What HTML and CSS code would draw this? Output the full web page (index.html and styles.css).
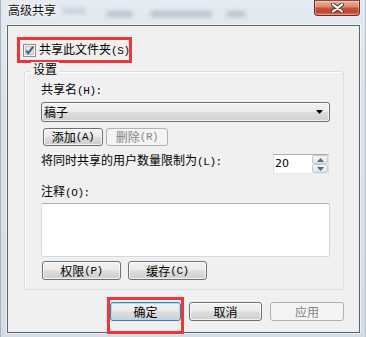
FILE: index.html
```html
<!DOCTYPE html>
<html>
<head>
<meta charset="utf-8">
<link rel="stylesheet" href="styles.css">
</head>
<body>
<div class="window">
  <div class="titlebar">
    <span class="title">高级共享</span>
    <div class="blurs">
      <span class="blob b1"></span>
      <span class="blob b2"></span>
      <span class="blob b3"></span>
      <span class="blob b4"></span>
    </div>
    <div class="close">
      <svg width="13" height="10" viewBox="0 0 13 10">
        <path d="M2 1.5 L11 8.5 M11 1.5 L2 8.5" stroke="#4a3a38" stroke-width="4" stroke-linecap="round" fill="none"/>
        <path d="M2 1.5 L11 8.5 M11 1.5 L2 8.5" stroke="#ffffff" stroke-width="2.2" stroke-linecap="round" fill="none"/>
      </svg>
    </div>
  </div>
  <div class="client">
    <div class="share-row">
      <svg class="chk" width="13" height="13" viewBox="0 0 13 13">
        <rect x="0.5" y="0.5" width="12" height="12" fill="#f6f6f6" stroke="#8e8f8f"/>
        <rect x="2.5" y="2.5" width="8" height="8" fill="#e2e2e2" stroke="#c4c4c4"/>
        <path d="M3.2 6.6 L5.3 9.3 L10.2 2.6" fill="none" stroke="#3d5394" stroke-width="1.8"/>
      </svg>
      <span>共享此文件夹<span class="m">(S)</span></span>
    </div>
    <div class="group">
      <div class="legend">设置</div>
      <div class="lbl first">共享名<span class="m">(H):</span></div>
      <div class="combo">
        <span>稿子</span>
        <svg width="7" height="4" viewBox="0 0 7 4"><path d="M0 0 H7 L3.5 4 Z" fill="#000"/></svg>
      </div>
      <div class="btnrow">
        <div class="btn add">添加<span class="m">(A)</span></div>
        <div class="btn disabled del">删除<span class="m">(R)</span></div>
      </div>
      <div class="limit-row">
        <span>将同时共享的用户数量限制为<span class="m">(L):</span></span>
        <div class="spin">
          <span class="spin-val">20</span>
          <div class="spin-btns">
            <div class="spin-btn"><svg width="7" height="4" viewBox="0 0 7 4"><path d="M0 4 H7 L3.5 0 Z" fill="#4d6b8e"/></svg></div>
            <div class="spin-btn"><svg width="7" height="4" viewBox="0 0 7 4"><path d="M0 0 H7 L3.5 4 Z" fill="#4d6b8e"/></svg></div>
          </div>
        </div>
      </div>
      <div class="lbl note">注释<span class="m">(O):</span></div>
      <div class="memo"></div>
      <div class="btnrow2">
        <div class="btn perm">权限<span class="m">(P)</span></div>
        <div class="btn perm">缓存<span class="m">(C)</span></div>
      </div>
    </div>
    <div class="footer">
      <div class="ok-wrap">
        <div class="btn default ok">确定</div>
        <div class="mark"></div>
      </div>
      <div class="btn cancel">取消</div>
      <div class="btn disabled apply">应用</div>
    </div>
  </div>
</div>
</body>
</html>
```
FILE: styles.css
```css
* { box-sizing: border-box; }
html, body { margin: 0; padding: 0; }
body {
  width: 366px;
  height: 337px;
  overflow: hidden;
  font-family: "Noto Sans CJK SC", "Noto Sans", sans-serif;
  font-size: 12px;
  line-height: 14px;
  color: #000;
  background: #d8e1eb;
}
.m {
  font-family: "Liberation Mono", "DejaVu Sans Mono", monospace;
  font-size: 11px;
  letter-spacing: -0.4px;
}
.window {
  width: 366px;
  height: 337px;
  display: flex;
  flex-direction: column;
  background: linear-gradient(#e4ebf2 0%, #d9e2ec 30%, #d3dde8 100%);
  box-shadow: inset 1px 0 0 #a9b3bd, inset -1px 0 0 #b7c1cb;
}
.titlebar {
  height: 25px;
  display: flex;
  align-items: flex-start;
  padding-left: 8px;
}
.title {
  padding-top: 3px;
  font-size: 12px;
  color: #111;
  text-shadow: 0 0 5px #fff, 0 0 3px #fff;
}
.blurs {
  display: flex;
  align-items: flex-start;
}
.blob {
  display: block;
  height: 6px;
  border-radius: 3px;
  background: rgba(110, 120, 132, 0.35);
  filter: blur(2px);
}
.b1 { margin-left: 6px; margin-top: 8px; width: 24px; background: rgba(150, 165, 180, 0.35); }
.b2 { margin-left: 20px; margin-top: 11px; width: 27px; }
.b3 { margin-left: 17px; margin-top: 11px; width: 62px; }
.b4 { margin-left: 14px; margin-top: 11px; width: 20px; }
.close {
  margin-left: auto;
  margin-right: 6px;
  width: 46px;
  height: 16px;
  border: 1px solid #6a2b22;
  border-top-color: #8a4a40;
  border-radius: 0 0 4px 4px;
  background: linear-gradient(#eab0a2 0%, #dc8a76 40%, #c8513b 52%, #c2452f 78%, #d2745b 100%);
  box-shadow: inset 0 0 0 1px rgba(255, 220, 210, 0.45);
  display: flex;
  align-items: center;
  justify-content: center;
}
.client {
  margin-left: 7px;
  width: 353px;
  height: 308px;
  border: 1px solid #5f6366;
  background: #f0f0f0;
  box-shadow: 0 0 0 1px rgba(255, 255, 255, 0.55);
}
.share-row {
  margin-left: 9px;
  margin-top: 11px;
  width: 115px;
  height: 26px;
  border: 3px solid #ef3636;
  display: flex;
  align-items: center;
  padding-left: 3px;
  gap: 3px;
  white-space: nowrap;
}
.chk { display: block; flex: none; }
.group {
  margin-left: 16px;
  margin-top: 8px;
  width: 320px;
  height: 219px;
  border: 1px solid #d5dfe5;
  border-radius: 3px;
  box-shadow: inset 1px 1px 0 #fff;
  padding: 0 13px 0 16px;
}
.legend {
  margin-top: -10px;
  margin-left: -10px;
  padding: 0 2px;
  width: fit-content;
  background: #f0f0f0;
}
.lbl { white-space: nowrap; }
.lbl.first { margin-top: 6px; }
.combo {
  margin-top: 4px;
  width: 289px;
  height: 20px;
  border: 1px solid #707070;
  border-radius: 3px;
  background: linear-gradient(#f2f2f2 0%, #ebebeb 48%, #dddddd 52%, #cfcfcf 100%);
  box-shadow: inset 0 0 0 1px rgba(255, 255, 255, 0.7);
  display: flex;
  align-items: center;
  justify-content: space-between;
  padding: 0 6px 0 2px;
}
.combo svg { display: block; }
.btn {
  height: 18px;
  border: 1px solid #707070;
  border-radius: 3px;
  background: linear-gradient(#f2f2f2 0%, #ebebeb 48%, #dddddd 52%, #cfcfcf 100%);
  box-shadow: inset 0 0 0 1px rgba(255, 255, 255, 0.75);
  display: flex;
  align-items: center;
  justify-content: center;
  white-space: nowrap;
}
.btn.disabled {
  border-color: #adb2b5;
  background: #f4f4f4;
  color: #838383;
  box-shadow: none;
}
.btnrow {
  margin-top: 6px;
  margin-left: 2px;
  display: flex;
  gap: 3px;
}
.add { width: 60px; }
.del { width: 62px; }
.limit-row {
  margin-top: 7px;
  height: 21px;
  display: flex;
  align-items: flex-start;
  justify-content: space-between;
  padding-right: 1px;
  white-space: nowrap;
}
.spin {
  margin-top: 1px;
  width: 56px;
  height: 20px;
  border: 1px solid #abadb3;
  border-left-color: #dbdfe6;
  border-right-color: #dbdfe6;
  border-bottom-color: #e3e9ef;
  border-top-color: #abadb3;
  background: #fff;
  display: flex;
}
.spin-val {
  flex: 1;
  padding-left: 1px;
  font-family: "DejaVu Sans", "Liberation Sans", sans-serif;
  font-size: 11px;
  line-height: 18px;
}
.spin-btns {
  width: 16px;
  display: flex;
  flex-direction: column;
}
.spin-btn {
  flex: 1;
  border: 1px solid #c3cad2;
  border-radius: 2px;
  background: linear-gradient(#f3f5f8, #dfe5ec);
  display: flex;
  align-items: center;
  justify-content: center;
}
.spin-btn svg { display: block; }
.lbl.note { margin-top: 10px; }
.memo {
  margin-top: 3px;
  width: 289px;
  height: 54px;
  border: 1px solid #e2e8ef;
  border-top-color: #a6b1bd;
  border-left-color: #d6dde5;
  border-right-color: #c9d6e3;
  border-bottom-color: #cfdce8;
  border-radius: 2px;
  background: #fff;
}
.btnrow2 {
  margin-top: 4px;
  margin-left: 1px;
  display: flex;
  gap: 7px;
}
.perm { width: 79px; height: 19px; }
.footer {
  margin-top: 12px;
  display: flex;
  justify-content: flex-end;
  gap: 8px;
  padding-right: 15px;
}
.ok-wrap { position: relative; }
.ok { width: 71px; height: 19px; }
.btn.default {
  border-color: #3c7fb1;
  box-shadow: inset 0 0 0 1px #a8dcf7;
}
.mark {
  position: absolute;
  left: -3px;
  top: -5px;
  width: 77px;
  height: 37px;
  border: 3px solid #ef3636;
}
.cancel { width: 73px; height: 19px; }
.apply { width: 74px; height: 19px; }
```
